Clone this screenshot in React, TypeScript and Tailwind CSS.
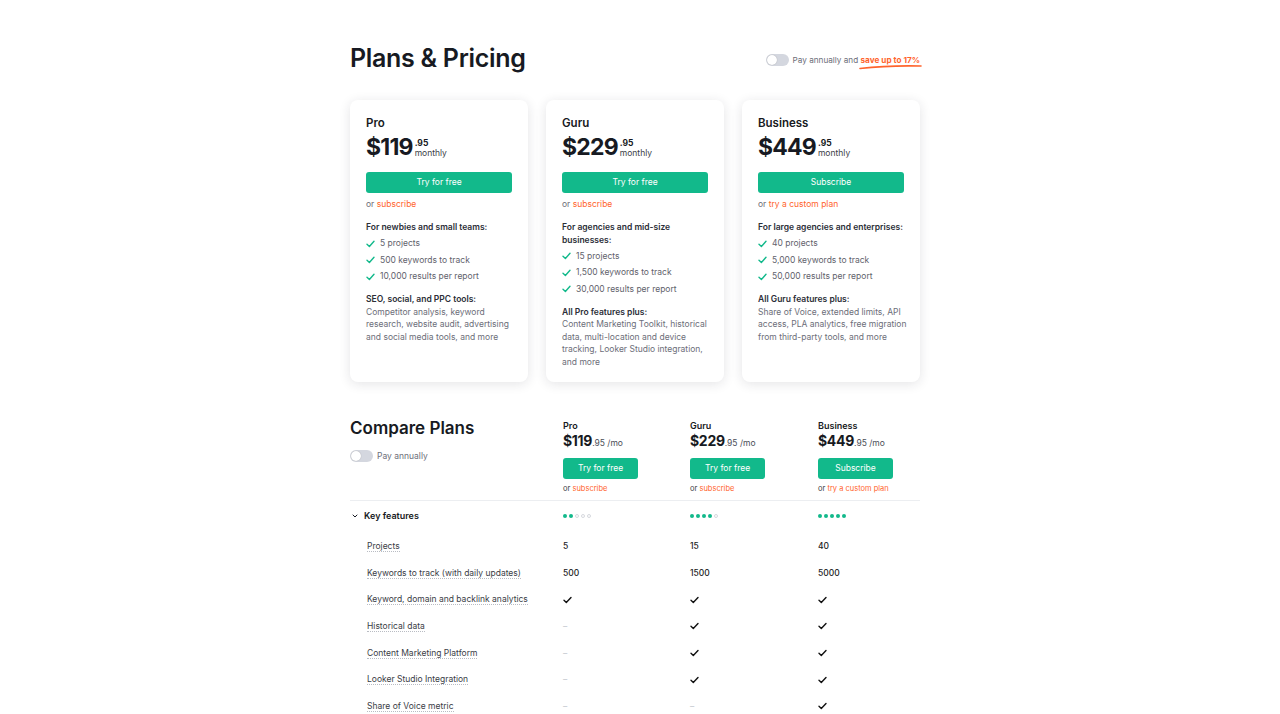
import { ChevronDown } from 'lucide-react';

const green = 'bg-[#12b98b]';

function Toggle() {
  return (
    <span className="relative inline-flex h-[12px] w-[23px] shrink-0 rounded-full bg-[#d4d7df]">
      <span className="absolute left-[1px] top-[1px] h-[10px] w-[10px] rounded-full bg-white shadow-[0_0_1px_rgba(0,0,0,0.3)]" />
    </span>
  );
}

function GreenCheck() {
  return (
    <svg width="9" height="8" viewBox="0 0 9 8" className="shrink-0">
      <path d="M1 4.3 L3.4 6.5 L8 1.3" fill="none" stroke="#12b98b" strokeWidth="1.4" strokeLinecap="round" strokeLinejoin="round" />
    </svg>
  );
}

function BlackCheck() {
  return (
    <svg width="9" height="8" viewBox="0 0 9 8">
      <path d="M1 4.2 L3.3 6.4 L8 1.4" fill="none" stroke="#111" strokeWidth="1.4" strokeLinecap="round" strokeLinejoin="round" />
    </svg>
  );
}

const plans = [
  {
    name: 'Pro',
    price: '$119',
    cta: 'Try for free',
    alt: 'subscribe',
    audience: ['For newbies and small teams:'],
    items: ['5 projects', '500 keywords to track', '10,000 results per report'],
    extraTitle: 'SEO, social, and PPC tools:',
    extra: ['Competitor analysis, keyword', 'research, website audit, advertising', 'and social media tools, and more'],
  },
  {
    name: 'Guru',
    price: '$229',
    cta: 'Try for free',
    alt: 'subscribe',
    audience: ['For agencies and mid-size', 'businesses:'],
    items: ['15 projects', '1,500 keywords to track', '30,000 results per report'],
    extraTitle: 'All Pro features plus:',
    extra: ['Content Marketing Toolkit, historical', 'data, multi-location and device', 'tracking, Looker Studio integration,', 'and more'],
  },
  {
    name: 'Business',
    price: '$449',
    cta: 'Subscribe',
    alt: 'try a custom plan',
    audience: ['For large agencies and enterprises:'],
    items: ['40 projects', '5,000 keywords to track', '50,000 results per report'],
    extraTitle: 'All Guru features plus:',
    extra: ['Share of Voice, extended limits, API', 'access, PLA analytics, free migration', 'from third-party tools, and more'],
  },
];

const rows: { label: string; values: (string | boolean)[] }[] = [
  { label: 'Projects', values: ['5', '15', '40'] },
  { label: 'Keywords to track (with daily updates)', values: ['500', '1500', '5000'] },
  { label: 'Keyword, domain and backlink analytics', values: [true, true, true] },
  { label: 'Historical data', values: [false, true, true] },
  { label: 'Content Marketing Platform', values: [false, true, true] },
  { label: 'Looker Studio Integration', values: [false, true, true] },
  { label: 'Share of Voice metric', values: [false, false, true] },
];

function Dots({ filled }: { filled: number }) {
  return (
    <div className="flex items-center gap-[2px]">
      {[0, 1, 2, 3, 4].map((i) =>
        i < filled ? (
          <span key={i} className="h-[4px] w-[4px] rounded-full bg-[#12b98b]" />
        ) : (
          <span key={i} className="h-[4px] w-[4px] rounded-full border border-[#d6d9de]" />
        ),
      )}
    </div>
  );
}

export default function App() {
  return (
    <div className="min-h-screen bg-white font-['Inter',sans-serif] text-[#171a22]">
      <div className="mx-auto w-[580px] pr-[10px] pt-[42px]">
        {/* Header */}
        <div className="flex items-center justify-between">
          <h1 className="text-[25px] font-semibold leading-[32px] tracking-[-0.3px]">Plans &amp; Pricing</h1>
          <div className="mt-[5px] flex items-center gap-[4px] text-[8.2px] text-[#6c6e79]">
            <Toggle />
            <span>
              Pay annually and{' '}
              <span className="relative font-bold text-[#ff642d]">
                save up to 17%
                <svg className="absolute left-[-2px] top-[9px]" width="64" height="6" viewBox="0 0 64 6">
                  <path d="M1 4.5 C18 2.5 40 1.5 62 2" fill="none" stroke="#ff642d" strokeWidth="1.6" strokeLinecap="round" />
                </svg>
              </span>
            </span>
          </div>
        </div>

        {/* Cards */}
        <div className="mt-[26px] grid grid-cols-3 gap-[18px]">
          {plans.map((p) => (
            <div key={p.name} className="h-[282px] rounded-[8px] bg-white px-[16px] pt-[15px] shadow-[0_2px_12px_rgba(30,35,50,0.12)]">
              <div className="text-[11.5px] font-semibold leading-[16px]">{p.name}</div>
              <div className="mt-[2px] flex items-start">
                <span className="text-[23px] font-bold leading-[28px] tracking-[-0.8px]">{p.price}</span>
                <div className="ml-[2px] mt-[5px] flex flex-col text-[8.5px] leading-[10px]">
                  <span className="font-bold">.95</span>
                  <span className="text-[#3a3d46]">monthly</span>
                </div>
              </div>
              <div className={`mt-[11px] flex h-[21px] items-center justify-center rounded-[3px] ${green} text-[8.5px] text-white`}>
                {p.cta}
              </div>
              <div className="mt-[5px] text-[8.5px] leading-[12px] text-[#6c6e79]">
                or <span className="text-[#ff642d]">{p.alt}</span>
              </div>
              <div className="mt-[11px] text-[8.5px] font-semibold leading-[12.5px] text-[#2b2e37]">
                {p.audience.map((a) => (
                  <div key={a}>{a}</div>
                ))}
              </div>
              <div className="mt-[2px] flex flex-col">
                {p.items.map((it) => (
                  <div key={it} className="flex h-[16.5px] items-center gap-[5px] text-[8.5px] text-[#5f626c]">
                    <GreenCheck />
                    {it}
                  </div>
                ))}
              </div>
              <div className="mt-[8px] text-[8.5px] font-semibold leading-[12.5px] text-[#2b2e37]">{p.extraTitle}</div>
              <div className="whitespace-nowrap text-[8.5px] leading-[12.5px] text-[#6c6e79]">
                {p.extra.map((e) => (
                  <div key={e}>{e}</div>
                ))}
              </div>
            </div>
          ))}
        </div>

        {/* Compare plans */}
        <div className="mt-[37px] grid grid-cols-[213px_127px_128px_102px] border-b border-[#eceef1] pb-[6px]">
          <div>
            <h2 className="text-[17px] font-semibold leading-[18px]">Compare Plans</h2>
            <div className="mt-[13px] flex items-center gap-[4px] text-[8.5px] text-[#6c6e79]">
              <Toggle />
              Pay annually
            </div>
          </div>
          {plans.map((p) => (
            <div key={p.name} className="pt-[1px]">
              <div className="text-[9px] font-semibold leading-[12px]">{p.name}</div>
              <div className="flex items-baseline">
                <span className="text-[14px] font-bold leading-[18px] tracking-[-0.3px]">{p.price}</span>
                <span className="text-[8.5px] text-[#4a4d56]">.95 /mo</span>
              </div>
              <div className={`mt-[8px] flex h-[21px] w-[75px] items-center justify-center rounded-[3px] ${green} text-[8.5px] text-white`}>
                {p.cta}
              </div>
              <div className="mt-[4px] text-[7.5px] leading-[11px] text-[#3a3d46]">
                or <span className="text-[#ff642d]">{p.alt}</span>
              </div>
            </div>
          ))}
        </div>

        <div className="grid h-[30px] grid-cols-[213px_127px_128px_102px] items-center">
          <div className="flex items-center gap-[5px] pl-[1px] text-[9px] font-semibold">
            <ChevronDown size={8} strokeWidth={3} />
            Key features
          </div>
          <Dots filled={2} />
          <Dots filled={4} />
          <Dots filled={5} />
        </div>

        <div className="pt-[2px]">
          {rows.map((r) => (
            <div key={r.label} className="grid h-[26.7px] grid-cols-[213px_127px_128px_102px] items-center text-[8.5px]">
              <div className="pl-[17px]">
                <span className="border-b border-dotted border-[#b9bcc3] text-[#3a3d46]">{r.label}</span>
              </div>
              {r.values.map((v, i) => (
                <div key={i} className="font-medium text-[#222]">
                  {typeof v === 'string' ? v : v ? <BlackCheck /> : <span className="text-[#c9ccd2]">–</span>}
                </div>
              ))}
            </div>
          ))}
        </div>
      </div>
    </div>
  );
}
